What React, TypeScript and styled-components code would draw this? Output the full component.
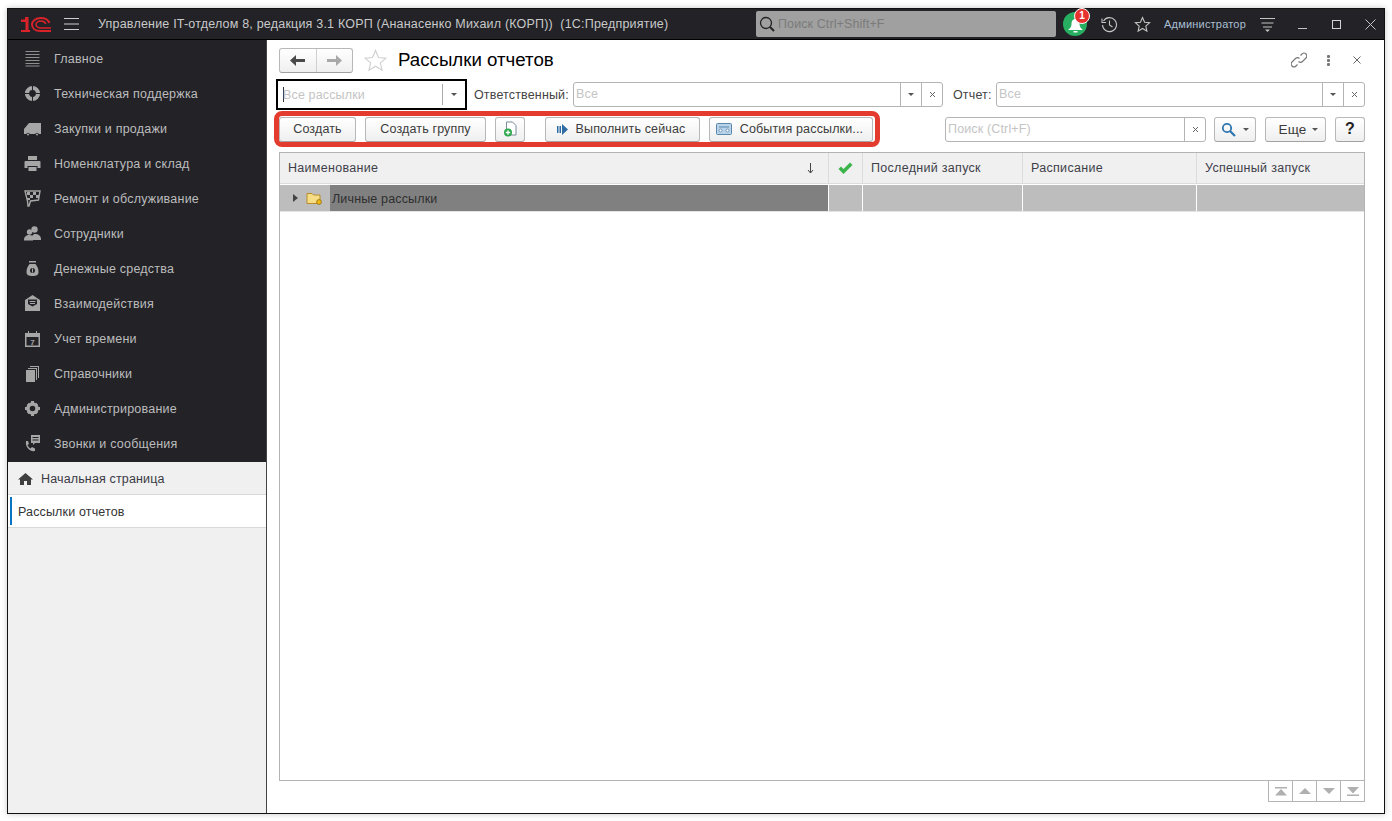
import React from "react";
import styled, { createGlobalStyle } from "styled-components";

const GlobalStyle = createGlobalStyle`
  html, body {
    margin: 0;
    padding: 0;
    background: #fff;
    font-family: "Liberation Sans", Arial, sans-serif;
  }
`;

const Page = styled.div`
  width: 1392px;
  height: 821px;
  padding: 8px 0 0 7px;
  box-sizing: border-box;
  overflow: hidden;
`;

const AppWindow = styled.div`
  width: 1378px;
  height: 806px;
  box-sizing: border-box;
  border: 1px solid #111;
  box-shadow: 0 0 6px rgba(0, 0, 0, 0.22);
  background: #fff;
  display: flex;
  flex-direction: column;
`;

const TitleBar = styled.header`
  height: 31px;
  flex: none;
  box-sizing: border-box;
  background: #222227;
  border-bottom: 1px solid #000;
  display: flex;
  align-items: center;
  color: #c9c9c9;
`;

const Logo = styled.svg`
  width: 30px;
  height: 15px;
  margin-left: 13px;
  flex: none;
`;

const Burger = styled.svg`
  width: 15px;
  height: 12px;
  margin-left: 13px;
  flex: none;
`;

const AppTitle = styled.div`
  margin-left: 19px;
  width: 658px;
  white-space: pre;
  flex: none;
  font-size: 12.5px;
  letter-spacing: 0.2px;
`;

const GlobalSearch = styled.div`
  width: 300px;
  height: 26px;
  flex: none;
  background: #a0a0a0;
  border-radius: 2px;
  display: flex;
  align-items: center;
  gap: 3px;
  padding-left: 3px;
  box-sizing: border-box;
  color: #7b7b7b;
  font-size: 12.5px;
  letter-spacing: 0.1px;
`;

const BellWrap = styled.div`
  position: relative;
  width: 24px;
  height: 24px;
  margin-left: 7px;
  flex: none;
  border-radius: 50%;
  background: #27ae60;
`;

const Badge = styled.span`
  position: absolute;
  top: -4px;
  right: -3px;
  width: 14px;
  height: 14px;
  border-radius: 50%;
  background: #e8322e;
  border: 1px solid #fff;
  color: #fff;
  font-size: 10px;
  font-weight: 700;
  line-height: 14px;
  text-align: center;
`;

const TitleIcon = styled.svg<{ $gap: number }>`
  margin-left: ${(p) => p.$gap}px;
  flex: none;
`;

const UserName = styled.span`
  margin-left: 13px;
  color: #a9bfd2;
  font-size: 11px;
  letter-spacing: 0.2px;
  white-space: nowrap;
  flex: none;
  width: 83px;
`;

const Body = styled.div`
  flex: 1;
  display: flex;
  min-height: 0;
`;

const Sidebar = styled.aside`
  width: 259px;
  flex: none;
  box-sizing: border-box;
  border-right: 1px solid #444;
  background: #f0f0f0;
  display: flex;
  flex-direction: column;
`;

const Menu = styled.nav`
  background: #222227;
  padding: 1px 0;
`;

const MenuItem = styled.div`
  height: 35px;
  display: flex;
  align-items: center;
  color: #bdbdbd;
  font-size: 12.5px;
  letter-spacing: 0.22px;
`;

const MenuIcon = styled.span`
  width: 17px;
  height: 17px;
  margin-left: 16px;
  margin-right: 13px;
  display: flex;
  align-items: center;
  justify-content: center;
  flex: none;
  color: #a6a6a6;
`;

const HomeRow = styled.div`
  height: 33px;
  box-sizing: border-box;
  border-bottom: 1px solid #d9d9d9;
  display: flex;
  align-items: center;
  gap: 8px;
  padding: 1px 0 0 10px;
  color: #3a3a44;
  font-size: 12.5px;
  letter-spacing: 0.15px;
`;

const OpenTab = styled.div`
  height: 33px;
  box-sizing: border-box;
  background: #fff;
  border-bottom: 1px solid #d9d9d9;
  display: flex;
  align-items: center;
  color: #333;
  font-size: 12.5px;
  letter-spacing: 0.15px;
  padding: 1px 0 0 2px;
`;

const TabMark = styled.span`
  width: 2px;
  height: 28px;
  background: #0a74c4;
  margin-right: 6px;
  margin-top: -2px;
`;

const Content = styled.main`
  flex: 1;
  min-width: 0;
  display: flex;
  flex-direction: column;
  color: #333;
  font-size: 12.5px;
  letter-spacing: 0.15px;
`;

const HeadRow = styled.div`
  height: 33px;
  flex: none;
  padding: 7px 23px 0 12px;
  box-sizing: border-box;
  display: flex;
  align-items: center;
`;

const NavGroup = styled.div`
  width: 74px;
  height: 25px;
  box-sizing: border-box;
  display: flex;
  border: 1px solid #b8b8b8;
  border-bottom-color: #a0a0a0;
  border-radius: 3px;
  background: linear-gradient(#fff, #efefef);
`;

const NavBtn = styled.span`
  flex: 1;
  display: flex;
  align-items: center;
  justify-content: center;
  & + & {
    border-left: 1px solid #d0d0d0;
  }
`;

const PageTitle = styled.h1`
  margin: 0 0 0 11px;
  font-size: 18.7px;
  font-weight: 400;
  color: #000;
  white-space: nowrap;
  letter-spacing: 0;
`;

const HeadTools = styled.div`
  margin-left: auto;
  display: flex;
  align-items: center;
  gap: 20px;
`;

const CloseIcon = styled.svg`
  margin-left: 3px;
`;

const FilterRow = styled.div`
  margin-top: 6px;
  height: 31px;
  flex: none;
  padding: 0 19px 0 9px;
  display: flex;
  align-items: center;
`;

const FocusField = styled.div`
  width: 191px;
  height: 31px;
  box-sizing: border-box;
  border: 2px solid #000;
  display: flex;
  align-items: center;
  flex: none;
`;

const Caret = styled.span`
  width: 1px;
  height: 15px;
  background: #333;
  margin-left: 5px;
  margin-right: -1px;
`;

const FocusText = styled.span`
  color: #c4c4c4;
  flex: 1;
`;

const FocusArrow = styled.span`
  width: 21px;
  height: 21px;
  border-left: 1px solid #aaa;
  display: flex;
  align-items: center;
  justify-content: center;
  margin-right: 1px;
`;

const FieldLabel = styled.label<{ $gap: number; $width: number }>`
  margin: 0 5px 0 ${(p) => p.$gap}px;
  width: ${(p) => p.$width}px;
  color: #444;
  white-space: nowrap;
  flex: none;
`;

const Field = styled.div<{ $width: number }>`
  width: ${(p) => p.$width}px;
  height: 25px;
  box-sizing: border-box;
  border: 1px solid #b4b4b4;
  border-radius: 3px;
  background: #fff;
  display: flex;
  align-items: stretch;
  flex: none;
`;

const FieldText = styled.span`
  flex: 1;
  padding-left: 2px;
  line-height: 23px;
  color: #c4c4c4;
  white-space: nowrap;
`;

const FieldBtn = styled.span`
  width: 21px;
  box-sizing: border-box;
  border-left: 1px solid #b4b4b4;
  display: flex;
  align-items: center;
  justify-content: center;
  flex: none;
  color: #666;
`;

const Toolbar = styled.div`
  margin-top: 1px;
  height: 36px;
  flex: none;
  padding: 0 19px 0 7px;
  display: flex;
  align-items: center;
`;

const Highlight = styled.div`
  width: 606px;
  height: 36px;
  box-sizing: border-box;
  border: 5px solid #e33c2f;
  border-radius: 8px;
  display: flex;
  align-items: center;
  flex: none;
`;

const Button = styled.button<{ $width: number; $gap?: number }>`
  width: ${(p) => p.$width}px;
  height: 25px;
  margin-left: ${(p) => p.$gap ?? 0}px;
  padding: 0;
  flex: none;
  box-sizing: border-box;
  border: 1px solid #b8b8b8;
  border-bottom-color: #a2a2a2;
  border-radius: 3px;
  background: linear-gradient(#fff, #efefef);
  font-family: inherit;
  font-size: 12.5px;
  letter-spacing: 0.15px;
  color: #3c3c3c;
  display: flex;
  align-items: center;
  justify-content: center;
  gap: 7px;
`;

const IconTextButton = styled(Button)`
  padding-right: 3px;
  gap: 8px;
`;

const MoreButton = styled(Button)`
  padding-left: 6px;
  font-size: 13.5px;
  gap: 6px;
`;

const HelpButton = styled(Button)`
  font-size: 16px;
  font-weight: 700;
  color: #222;
`;

const RightTools = styled.div`
  margin-left: 65px;
  display: flex;
  align-items: center;
`;

const SearchField = styled(Field)`
  margin-right: 8px;
`;

const Table = styled.section`
  margin: 5px 0 0 12px;
  width: 1086px;
  flex: none;
  height: 629px;
  box-sizing: border-box;
  border: 1px solid #b4b4b4;
  background: #fff;
`;

const gridCols = "549px 34px 160px 174px 1fr";

const HeaderGrid = styled.div`
  display: grid;
  grid-template-columns: ${gridCols};
  height: 30px;
  background: #f0f0f0;
  border-bottom: 1px solid #dcdcdc;
`;

const HeaderCell = styled.div<{ $center?: boolean }>`
  display: flex;
  align-items: center;
  justify-content: ${(p) => (p.$center ? "center" : "space-between")};
  padding: ${(p) => (p.$center ? "0" : "0 14px 0 8px")};
  color: #3f3f4a;
  letter-spacing: 0.3px;
  border-right: 1px solid #dcdcdc;
  &:last-child {
    border-right: 0;
  }
`;

const RowGrid = styled.div`
  display: grid;
  grid-template-columns: ${gridCols};
  grid-template-rows: 26px;
  margin-top: 1px;
  height: 27px;
  box-sizing: border-box;
  border-bottom: 1px solid #e4e4e4;
`;

const RowCell = styled.div`
  background: #bdbdbd;
  border-right: 1px solid #fff;
  &:last-child {
    border-right: 0;
  }
`;

const NameCell = styled.div`
  display: flex;
  border-right: 1px solid #fff;
`;

const TreeCell = styled.div`
  width: 50px;
  flex: none;
  background: #bdbdbd;
  display: flex;
  align-items: center;
  padding-left: 13px;
  box-sizing: border-box;
  gap: 8px;
`;

const CurrentCell = styled.div`
  flex: 1;
  background: #808080;
  color: #2e2e2e;
  display: flex;
  align-items: center;
  padding: 1px 0 0 2px;
`;

const Pager = styled.div`
  align-self: flex-end;
  margin-right: 19px;
  display: flex;
  height: 21px;
  box-sizing: border-box;
  border: 1px solid #b4b4b4;
  border-top: 0;
  flex: none;
`;

const PagerBtn = styled.span`
  width: 23px;
  display: flex;
  align-items: center;
  justify-content: center;
  & + & {
    border-left: 1px solid #b4b4b4;
  }
`;

const ArrowDown = () => (
  <svg width="6" height="3" viewBox="0 0 6 3">
    <path d="M0 0h6L3 3z" fill="#555" />
  </svg>
);

const Cross = () => (
  <svg width="7" height="7" viewBox="0 0 7 7">
    <path d="M1 1l5 5M6 1L1 6" stroke="#666" strokeWidth="1" />
  </svg>
);

const Gray = ({ children, size = 17 }: { children: React.ReactNode; size?: number }) => (
  <svg width={size} height={size} viewBox="0 0 17 17" fill="#a6a6a6">
    {children}
  </svg>
);

const menu: { label: string; icon: React.ReactNode }[] = [
  {
    label: "Главное",
    icon: (
      <Gray>
        <path d="M1.500 1h14v1h-14zM1.500 4h14v1h-14zM1.500 7h14v1h-14zM1.500 10h14v1h-14zM1.500 13h14v1h-14zM1.500 15.500h14v1h-14z" fill="#8f8f8f" />
      </Gray>
    ),
  },
  {
    label: "Техническая поддержка",
    icon: (
      <Gray>
        <circle cx="8.500" cy="8.500" r="5.500" fill="none" stroke="#a6a6a6" strokeWidth="4.200" />
        <path d="M8 0h1v17H8zM0 8h17v1H0z" fill="#222227" />
      </Gray>
    ),
  },
  {
    label: "Закупки и продажи",
    icon: (
      <Gray>
        <path d="M0 14v-5l5-6h12v11z" />
        <circle cx="4" cy="14.500" r="1.800" fill="#222227" />
        <circle cx="13" cy="14.500" r="1.800" fill="#222227" />
        <circle cx="4" cy="14.500" r="1" />
        <circle cx="13" cy="14.500" r="1" />
      </Gray>
    ),
  },
  {
    label: "Номенклатура и склад",
    icon: (
      <Gray>
        <path d="M4 1h9v4H4zM1.500 6h14a1 1 0 0 1 1 1v6h-3v-2h-10v2h-3V7a1 1 0 0 1 1-1zM4.500 12h8v4h-8z" />
      </Gray>
    ),
  },
  {
    label: "Ремонт и обслуживание",
    icon: (
      <Gray>
        <path d="M1 1l15 0-1.500 9-8 1-1.500 5-1 0-.5-5z" fill="none" stroke="#a6a6a6" strokeWidth="1.400" />
        <path d="M3 2h3v3H3zM9 2h3v3H9zM6 5h3v3H6zM12 5h3v3h-3zM3 8h3v2H3z" />
      </Gray>
    ),
  },
  {
    label: "Сотрудники",
    icon: (
      <Gray>
        <circle cx="10.500" cy="4.500" r="3.200" />
        <circle cx="5.500" cy="7" r="2.700" />
        <path d="M0 15c0-3 2-5 5.500-5 1.200 0 2 .3 2.800.8C9 9.500 10 9 11 9c3.500 0 6 2 6 5v1H9v.5H0z" />
      </Gray>
    ),
  },
  {
    label: "Денежные средства",
    icon: (
      <Gray>
        <path d="M5 1h7v1.500H5zM5.500 4h6c2 2.500 3 5 3 8 0 3-2 4-6 4s-6-1-6-4c0-3 1-5.500 3-8z" />
        <circle cx="8.500" cy="10.500" r="2.500" fill="#222227" />
        <path d="M8 8.500h1v4H8z" />
      </Gray>
    ),
  },
  {
    label: "Взаимодействия",
    icon: (
      <Gray>
        <path d="M8.500 0L1 5v11h15V5zM4 4.500h9V9l-4.500 2.500L4 9z" fillRule="evenodd" />
        <path d="M5.500 6h6v1h-6zM6 8h5v1H6z" />
      </Gray>
    ),
  },
  {
    label: "Учет времени",
    icon: (
      <Gray>
        <path d="M1 3h15v14H1zM2.500 7v8.500h12V7z" fillRule="evenodd" />
        <path d="M4 1h1v2H4zM12 1h1v2h-1z" />
        <text x="8.500" y="14.500" textAnchor="middle" fontSize="8" fontWeight="700" fontFamily="Liberation Sans">7</text>
      </Gray>
    ),
  },
  {
    label: "Справочники",
    icon: (
      <Gray>
        <path d="M2 5h9v12H2z" />
        <path d="M4 3h9v12h-1V4H4zM6 1h9v12h-1V2H6z" />
      </Gray>
    ),
  },
  {
    label: "Администрирование",
    icon: (
      <Gray>
        <circle cx="8.500" cy="8.500" r="4.500" fill="none" stroke="#a6a6a6" strokeWidth="3.400" />
        <path d="M7 1h3v3H7zM7 13h3v3H7zM1 7h3v3H1zM13 7h3v3h-3zM2.800 4.900l2.100-2.100 2 2-2.100 2.100zM10.100 12.200l2.100-2.100 2 2-2.100 2.100zM12.200 2.800l2 2.100-2 2-2.100-2.100zM4.800 10.100l2.100 2.100-2.100 2-2-2.100z" />
      </Gray>
    ),
  },
  {
    label: "Звонки и сообщения",
    icon: (
      <Gray>
        <path d="M7 0h9v8h-5l-2 2V8H7zM8.500 2v1h6V2zM8.500 4.500v1h6v-1z" fillRule="evenodd" />
        <path d="M2 6l2 0 1 3-1.500 1c.6 1.600 1.600 2.600 3 3.400L8 12l3 1.500V16c-5.500 1-10-4-9-10z" />
      </Gray>
    ),
  },
];

const CheckIcon = () => (
  <svg width="17" height="13" viewBox="0 0 16 13">
    <path d="M1 7l2.500-2.500L6 7l6.500-6.500L15 3 6 12z" fill="#3bb54a" />
  </svg>
);

export default function App() {
  return (
    <>
      <GlobalStyle />
      <Page>
        <AppWindow>
          <TitleBar>
            <Logo viewBox="0 0 30 15">
              <path d="M0 2.500h4V0h3.500v13H4.500V5H0zM0 13h9v2H0z" fill="#d8232a" />
              <path d="M28.500 6C27 2.500 24 1 20 1c-5.500 0-9 3-9 6.500S14 14 19.500 14H30" fill="none" stroke="#d8232a" strokeWidth="2" />
              <path d="M25 7c-1-2-3-3-5-3-3 0-5 1.700-5 3.500s2 3.500 5 3.500h10" fill="none" stroke="#d8232a" strokeWidth="1.600" />
            </Logo>
            <Burger viewBox="0 0 15 12">
              <path d="M0 .5h15M0 6h15M0 11.500h15" stroke="#cfcfcf" strokeWidth="1" />
            </Burger>
            <AppTitle>Управление IT-отделом 8, редакция 3.1 КОРП (Ананасенко Михаил (КОРП))  (1С:Предприятие)</AppTitle>
            <GlobalSearch>
              <svg width="16" height="16" viewBox="0 0 16 16">
                <circle cx="7" cy="7" r="5.500" fill="none" stroke="#222" strokeWidth="1.300" />
                <path d="M11 11l4 4" stroke="#222" strokeWidth="2" />
              </svg>
              Поиск Ctrl+Shift+F
            </GlobalSearch>
            <BellWrap>
              <svg width="24" height="24" viewBox="0 0 24 24">
                <path d="M12.500 7c3 0 4 2.500 4 5 0 3 1.500 4.500 3.500 6H5c2-1.500 3.500-3 3.500-6 0-2.500 1-5 4-5zM10.500 19h4v1.500h-4z" fill="#fff" />
              </svg>
              <Badge>1</Badge>
            </BellWrap>
            <TitleIcon $gap={14} width="17" height="17" viewBox="0 0 17 17">
              <path d="M2.500 5A7 7 0 1 1 1.500 9" fill="none" stroke="#c4c4c4" strokeWidth="1.100" />
              <path d="M1 2.500v4h4" fill="none" stroke="#c4c4c4" strokeWidth="1.100" />
              <path d="M8.500 4.500V9l3 2" fill="none" stroke="#c4c4c4" strokeWidth="1.100" />
            </TitleIcon>
            <TitleIcon $gap={16} width="17" height="17" viewBox="0 0 17 17">
              <path d="M8.500 1.500l2.100 4.700 5 .5-3.800 3.400 1.100 5-4.400-2.600-4.400 2.600 1.100-5L1.400 6.700l5-.5z" fill="none" stroke="#c4c4c4" strokeWidth="1.100" />
            </TitleIcon>
            <UserName>Администратор</UserName>
            <TitleIcon $gap={13} width="15" height="15" viewBox="0 0 15 15">
              <path d="M0 1.500h15M1.500 6h12M3 10h9" stroke="#c4c4c4" strokeWidth="1" />
              <path d="M5 12.500h5L7.500 15z" fill="#c4c4c4" />
            </TitleIcon>
            <TitleIcon $gap={23} width="9" height="9" viewBox="0 0 9 9">
              <path d="M0 8.500h9" stroke="#c4c4c4" strokeWidth="1" />
            </TitleIcon>
            <TitleIcon $gap={25} width="9" height="9" viewBox="0 0 9 9">
              <rect x=".5" y=".5" width="8" height="8" fill="none" stroke="#d4d4d4" strokeWidth="1" />
            </TitleIcon>
            <TitleIcon $gap={24} width="11" height="11" viewBox="0 0 11 11">
              <path d="M.5.500l10 10M10.500.500l-10 10" stroke="#c4c4c4" strokeWidth="1" />
            </TitleIcon>
          </TitleBar>
          <Body>
            <Sidebar>
              <Menu>
                {menu.map((m) => (
                  <MenuItem key={m.label}>
                    <MenuIcon>{m.icon}</MenuIcon>
                    {m.label}
                  </MenuItem>
                ))}
              </Menu>
              <HomeRow>
                <svg width="15" height="12" viewBox="0 0 15 12">
                  <path d="M7.500 0L15 6.500h-2V12H9V8H6v4H2V6.500H0z" fill="#3f3f3f" />
                </svg>
                Начальная страница
              </HomeRow>
              <OpenTab>
                <TabMark />
                Рассылки отчетов
              </OpenTab>
            </Sidebar>
            <Content>
              <HeadRow>
                <NavGroup>
                  <NavBtn>
                    <svg width="15" height="11" viewBox="0 0 15 11">
                      <path d="M6 0v4h9v3H6v4L0 5.500z" fill="#4a4a4a" />
                    </svg>
                  </NavBtn>
                  <NavBtn>
                    <svg width="15" height="11" viewBox="0 0 15 11">
                      <path d="M9 0v4H0v3h9v4l6-5.500z" fill="#a8a8a8" />
                    </svg>
                  </NavBtn>
                </NavGroup>
                <TitleIcon $gap={11} width="23" height="22" viewBox="0 0 23 22">
                  <path d="M11.500 1.500l3 7 7.500.6-5.700 4.800 1.800 7.300-6.600-4-6.600 4 1.800-7.300L1 9.100l7.500-.6z" fill="none" stroke="#cfcfcf" strokeWidth="1.100" />
                </TitleIcon>
                <PageTitle>Рассылки отчетов</PageTitle>
                <HeadTools>
                  <svg width="16" height="16" viewBox="0 0 16 16" fill="none" stroke="#777" strokeWidth="1.100">
                    <path d="M9.500 3.500l1.500-1.500a2.800 2.800 0 0 1 4 4L11.500 9.500a2.800 2.800 0 0 1-4 0" />
                    <path d="M6.500 12.500L5 14a2.800 2.800 0 0 1-4-4L4.500 6.500a2.800 2.800 0 0 1 4 0" />
                  </svg>
                  <svg width="3" height="11" viewBox="0 0 3 11" fill="#777">
                    <rect width="3" height="3" rx="1" />
                    <rect y="4" width="3" height="3" rx="1" />
                    <rect y="8" width="3" height="3" rx="1" />
                  </svg>
                  <CloseIcon width="8" height="8" viewBox="0 0 8 8">
                    <path d="M.5.500l7 7M7.500.500l-7 7" stroke="#666" strokeWidth="1" />
                  </CloseIcon>
                </HeadTools>
              </HeadRow>
              <FilterRow>
                <FocusField>
                  <Caret />
                  <FocusText>Все рассылки</FocusText>
                  <FocusArrow>
                    <ArrowDown />
                  </FocusArrow>
                </FocusField>
                <FieldLabel $gap={7} $width={94}>Ответственный:</FieldLabel>
                <Field $width={370}>
                  <FieldText>Все</FieldText>
                  <FieldBtn><ArrowDown /></FieldBtn>
                  <FieldBtn><Cross /></FieldBtn>
                </Field>
                <FieldLabel $gap={10} $width={38}>Отчет:</FieldLabel>
                <Field $width={369}>
                  <FieldText>Все</FieldText>
                  <FieldBtn><ArrowDown /></FieldBtn>
                  <FieldBtn><Cross /></FieldBtn>
                </Field>
              </FilterRow>
              <Toolbar>
                <Highlight>
                  <Button $width={77}>Создать</Button>
                  <Button $width={121} $gap={9}>Создать группу</Button>
                  <Button $width={30} $gap={9}>
                    <svg width="15" height="16" viewBox="0 0 15 16">
                      <path d="M3.500 1h6l3.500 3.500V14h-9.500z" fill="#fff" stroke="#7b8a99" strokeWidth="1" />
                      <circle cx="5" cy="11.500" r="4" fill="#2ea84f" />
                      <path d="M5 9.300v4.400M2.800 11.500h4.400" stroke="#fff" strokeWidth="1.300" />
                    </svg>
                  </Button>
                  <IconTextButton $width={155} $gap={20}>
                    <svg width="11" height="11" viewBox="0 0 11 11" fill="#2d6da3">
                      <path d="M0 2h1.500v7H0zM2.500 2H4v7H2.500zM5 0l6 5.500L5 11z" />
                    </svg>
                    Выполнить сейчас
                  </IconTextButton>
                  <IconTextButton $width={164} $gap={9}>
                    <svg width="16" height="12" viewBox="0 0 16 12">
                      <rect x=".5" y=".5" width="15" height="11" rx="1" fill="#b9d4ea" stroke="#5b87ab" />
                      <path d="M3 4h10" stroke="#5b87ab" />
                      <circle cx="4.500" cy="7.500" r="1.500" fill="#fff" stroke="#5b87ab" strokeWidth=".8" />
                      <circle cx="11.500" cy="7.500" r="1.500" fill="#fff" stroke="#5b87ab" strokeWidth=".8" />
                    </svg>
                    События рассылки...
                  </IconTextButton>
                </Highlight>
                <RightTools>
                  <SearchField $width={261}>
                    <FieldText>Поиск (Ctrl+F)</FieldText>
                    <FieldBtn><Cross /></FieldBtn>
                  </SearchField>
                  <Button $width={42}>
                    <svg width="15" height="15" viewBox="0 0 15 15" fill="none" stroke="#2d75b0">
                      <circle cx="6" cy="6" r="4.200" strokeWidth="1.800" />
                      <path d="M9 9l5 5" strokeWidth="2.200" />
                    </svg>
                    <ArrowDown />
                  </Button>
                  <MoreButton $width={61} $gap={9}>
                    Еще
                    <ArrowDown />
                  </MoreButton>
                  <HelpButton $width={30} $gap={9}>?</HelpButton>
                </RightTools>
              </Toolbar>
              <Table>
                <HeaderGrid>
                  <HeaderCell>
                    Наименование
                    <svg width="7" height="11" viewBox="0 0 7 11">
                      <path d="M3.500 0v10M1 7l2.500 3L6 7" fill="none" stroke="#444" strokeWidth="1" />
                    </svg>
                  </HeaderCell>
                  <HeaderCell $center><CheckIcon /></HeaderCell>
                  <HeaderCell>Последний запуск</HeaderCell>
                  <HeaderCell>Расписание</HeaderCell>
                  <HeaderCell>Успешный запуск</HeaderCell>
                </HeaderGrid>
                <RowGrid>
                  <NameCell>
                    <TreeCell>
                      <svg width="5" height="8" viewBox="0 0 5 8">
                        <path d="M0 0l5 4-5 4z" fill="#444" />
                      </svg>
                      <svg width="16" height="14" viewBox="0 0 16 14">
                        <path d="M1 2.500h5l1.500 1.500H14v8.500H1z" fill="#f6dc85" stroke="#b58d2c" strokeWidth="1" />
                        <circle cx="13" cy="11" r="2.400" fill="#f2b90f" stroke="#8f6e10" strokeWidth=".8" />
                      </svg>
                    </TreeCell>
                    <CurrentCell>Личные рассылки</CurrentCell>
                  </NameCell>
                  <RowCell />
                  <RowCell />
                  <RowCell />
                  <RowCell />
                </RowGrid>
              </Table>
              <Pager>
                <PagerBtn>
                  <svg width="12" height="9" viewBox="0 0 12 9" fill="#b0b0b0"><path d="M0 0h12v1.500H0zM6 2l6 6.500H0z" /></svg>
                </PagerBtn>
                <PagerBtn>
                  <svg width="12" height="6" viewBox="0 0 12 6" fill="#b0b0b0"><path d="M6 0l6 6H0z" /></svg>
                </PagerBtn>
                <PagerBtn>
                  <svg width="12" height="6" viewBox="0 0 12 6" fill="#b0b0b0"><path d="M0 0h12L6 6z" /></svg>
                </PagerBtn>
                <PagerBtn>
                  <svg width="12" height="9" viewBox="0 0 12 9" fill="#b0b0b0"><path d="M0 0h12L6 6.500zM0 7.500h12V9H0z" /></svg>
                </PagerBtn>
              </Pager>
            </Content>
          </Body>
        </AppWindow>
      </Page>
    </>
  );
}
